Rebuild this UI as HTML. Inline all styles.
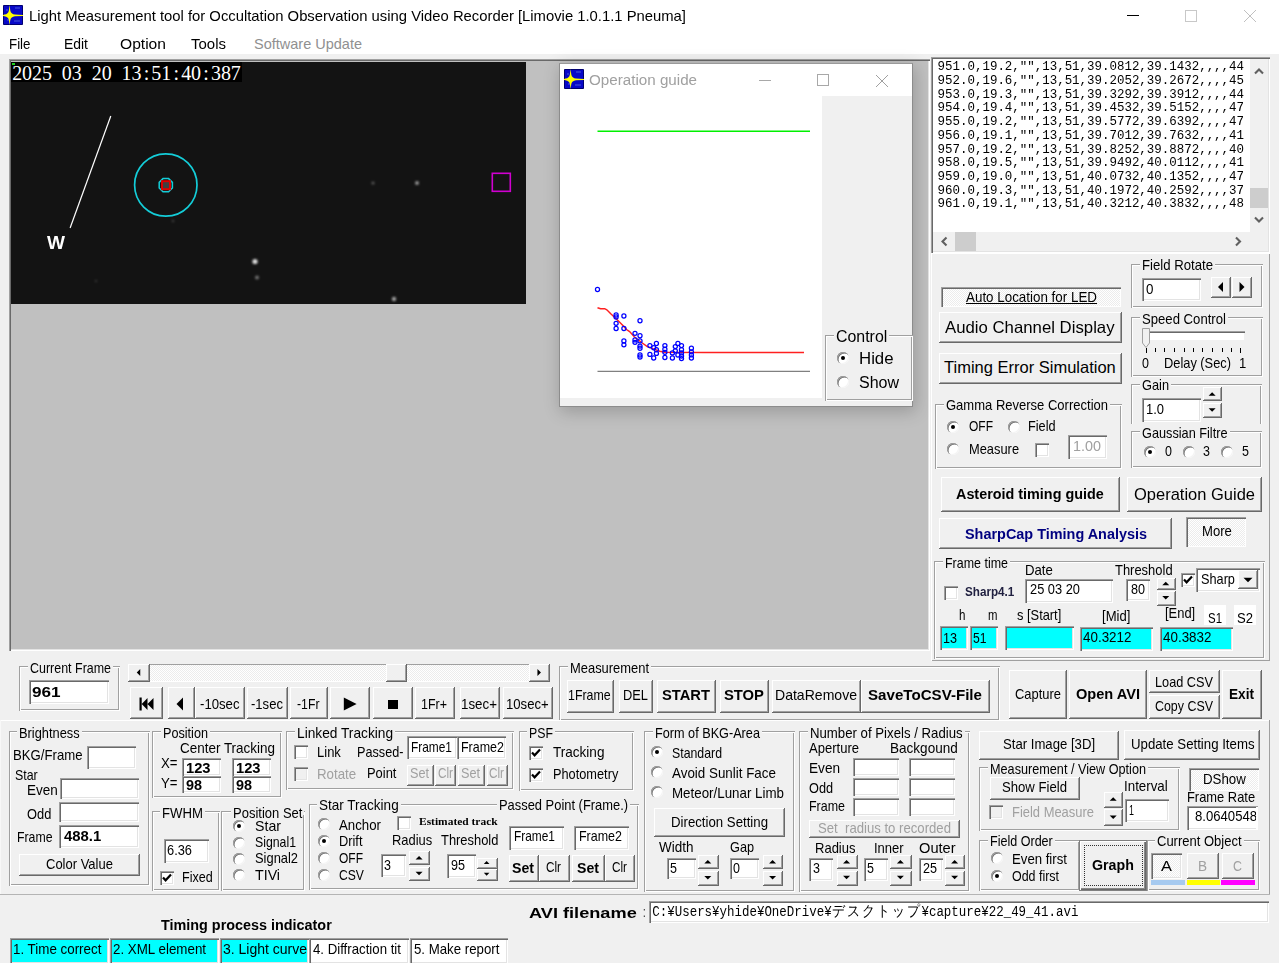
<!DOCTYPE html><html><head><meta charset="utf-8"><style>
*{margin:0;padding:0}
html,body{width:1279px;height:963px;overflow:hidden;background:#f0f0f0}
body{position:relative;font-family:"Liberation Sans",sans-serif;color:#000}
.a{position:absolute;box-sizing:border-box}
.t{position:absolute;white-space:nowrap;line-height:1;transform-origin:0 0;}
.btn{background:#f0f0f0;box-shadow:inset -1px -1px #696969,inset 1px 1px #fff,inset -2px -2px #a0a0a0}
.ed{background:#fff;box-shadow:inset 1px 1px #a0a0a0,inset 2px 2px #696969,inset -1px -1px #fff,inset -2px -2px #e3e3e3}
.grp{box-shadow:inset 1px 1px #a0a0a0,inset -1px -1px #fff,inset 2px 2px #fff,inset -2px -2px #a0a0a0}
.rd{width:12px;height:12px;border-radius:50%;background:#fff;box-shadow:inset 1px 1px #a0a0a0,inset 1.5px 1.5px #696969,inset -1px -1px #f4f4f4}
.rd i{position:absolute;left:4px;top:4px;width:4px;height:4px;border-radius:50%;background:#000}
.ck{box-shadow:inset 1px 1px #a0a0a0,inset 2px 2px #696969,inset -1px -1px #fff,inset -2px -2px #e3e3e3}
.dot{background-color:#f4f4f4;background-image:repeating-conic-gradient(#fff 0 25%,#ececec 0 50%);background-size:2px 2px}
.flat{box-shadow:inset 1px 1px #a0a0a0,inset 2px 2px #696969,inset -1px -1px #fff}
</style></head><body><div class="a " style="left:0px;top:0px;width:1279px;height:54px;background:#fff"></div>
<svg class="a" style="left:3px;top:5px" width="20" height="20" viewBox="0 0 20 20"><path d="M0.5 0.5H19.5V19.5H0.5Z" fill="#0808c8" stroke="#000070" stroke-width="1"/><path d="M3 5h2M12 3h5M11 16h6M4 15h2" stroke="#4a5ad8" stroke-width="1"/><path d="M6.6 0 L7.3 5.5 Q8 9.2 12 9.6 L20 9.9 V10.9 L12 11.2 Q8 11.8 7.3 15 L6.6 20 L5.9 15 Q5.2 11.8 1.5 11.2 L0 10.9 V9.9 L1.5 9.6 Q5.2 9.2 5.9 5.5Z" fill="#ffff00"/></svg>
<span class="t" style="left:28.75px;top:7.90px;font-size:15px;color:#000;transform:scale(0.9878,1.0000);-webkit-text-stroke:0;">Light Measurement tool for Occultation Observation using Video Recorder [Limovie 1.0.1.1 Pneuma]</span>
<div class="a " style="left:1127px;top:15px;width:12px;height:1px;background:#000"></div>
<div class="a " style="left:1185px;top:10px;width:12px;height:12px;border:1px solid #c8c8c8"></div>
<svg class="a" style="left:1243px;top:9px" width="14" height="14"><path d="M1 1L13 13M13 1L1 13" stroke="#c0c0c0" stroke-width="1"/></svg>
<span class="t" style="left:8.50px;top:37.13px;font-size:14.5px;color:#000;transform:scale(0.9198,1.0000);-webkit-text-stroke:0;">File</span>
<span class="t" style="left:63.50px;top:37.13px;font-size:14.5px;color:#000;transform:scale(0.9600,1.0000);-webkit-text-stroke:0;">Edit</span>
<span class="t" style="left:120.30px;top:37.13px;font-size:14.5px;color:#000;transform:scale(1.0760,1.0000);-webkit-text-stroke:0;">Option</span>
<span class="t" style="left:191.00px;top:37.13px;font-size:14.5px;color:#000;transform:scale(1.0332,1.0000);-webkit-text-stroke:0;">Tools</span>
<span class="t" style="left:254.00px;top:37.13px;font-size:14.5px;color:#909090;-webkit-text-stroke:0;">Software Update</span>
<div class="a " style="left:9px;top:59px;width:921px;height:592px;background:#c0c0c0;box-shadow:inset 1px 1px #a0a0a0,inset 2px 2px #696969,inset -1px -1px #fff,inset -2px -2px #e3e3e3"></div>
<div class="a " style="left:11px;top:62px;width:515px;height:242px;background:#131313"></div>
<div class="a " style="left:11px;top:62px;width:231px;height:20px;background:#000"></div>
<div class="a " style="left:12px;top:63px;width:3px;height:2px;background:#20d020"></div>
<span class="t" style="left:12.17px;top:63.05px;font-size:20px;font-family:'Liberation Serif',serif;color:#fff;">2</span>
<span class="t" style="left:22.11px;top:63.05px;font-size:20px;font-family:'Liberation Serif',serif;color:#fff;">0</span>
<span class="t" style="left:32.05px;top:63.05px;font-size:20px;font-family:'Liberation Serif',serif;color:#fff;">2</span>
<span class="t" style="left:41.99px;top:63.05px;font-size:20px;font-family:'Liberation Serif',serif;color:#fff;">5</span>
<span class="t" style="left:61.87px;top:63.05px;font-size:20px;font-family:'Liberation Serif',serif;color:#fff;">0</span>
<span class="t" style="left:71.81px;top:63.05px;font-size:20px;font-family:'Liberation Serif',serif;color:#fff;">3</span>
<span class="t" style="left:91.69px;top:63.05px;font-size:20px;font-family:'Liberation Serif',serif;color:#fff;">2</span>
<span class="t" style="left:101.63px;top:63.05px;font-size:20px;font-family:'Liberation Serif',serif;color:#fff;">0</span>
<span class="t" style="left:121.51px;top:63.05px;font-size:20px;font-family:'Liberation Serif',serif;color:#fff;">1</span>
<span class="t" style="left:131.45px;top:63.05px;font-size:20px;font-family:'Liberation Serif',serif;color:#fff;">3</span>
<span class="t" style="left:143.64px;top:63.05px;font-size:20px;font-family:'Liberation Serif',serif;color:#fff;">:</span>
<span class="t" style="left:151.33px;top:63.05px;font-size:20px;font-family:'Liberation Serif',serif;color:#fff;">5</span>
<span class="t" style="left:161.27px;top:63.05px;font-size:20px;font-family:'Liberation Serif',serif;color:#fff;">1</span>
<span class="t" style="left:173.46px;top:63.05px;font-size:20px;font-family:'Liberation Serif',serif;color:#fff;">:</span>
<span class="t" style="left:181.15px;top:63.05px;font-size:20px;font-family:'Liberation Serif',serif;color:#fff;">4</span>
<span class="t" style="left:191.09px;top:63.05px;font-size:20px;font-family:'Liberation Serif',serif;color:#fff;">0</span>
<span class="t" style="left:203.28px;top:63.05px;font-size:20px;font-family:'Liberation Serif',serif;color:#fff;">:</span>
<span class="t" style="left:210.97px;top:63.05px;font-size:20px;font-family:'Liberation Serif',serif;color:#fff;">3</span>
<span class="t" style="left:220.91px;top:63.05px;font-size:20px;font-family:'Liberation Serif',serif;color:#fff;">8</span>
<span class="t" style="left:230.85px;top:63.05px;font-size:20px;font-family:'Liberation Serif',serif;color:#fff;">7</span>
<span class="t" style="left:47.10px;top:233.76px;font-size:18px;font-weight:bold;color:#fff;transform:scale(1.0588,1.0000);">W</span>
<div class="a " style="left:559px;top:63px;width:354px;height:344px;background:#f0f0f0;border:1px solid #8c8c8c;border-top-color:#9a9a9a;box-shadow:2px 4px 16px 1px rgba(0,0,0,0.2)"></div>
<div class="a " style="left:560px;top:64px;width:352px;height:32px;background:#fff"></div>
<div class="a " style="left:560px;top:96px;width:262px;height:302px;background:#fff"></div>
<svg class="a" style="left:564px;top:69px" width="20" height="20" viewBox="0 0 20 20"><path d="M0.5 0.5H19.5V19.5H0.5Z" fill="#0808c8" stroke="#000070" stroke-width="1"/><path d="M3 5h2M12 3h5M11 16h6M4 15h2" stroke="#4a5ad8" stroke-width="1"/><path d="M6.6 0 L7.3 5.5 Q8 9.2 12 9.6 L20 9.9 V10.9 L12 11.2 Q8 11.8 7.3 15 L6.6 20 L5.9 15 Q5.2 11.8 1.5 11.2 L0 10.9 V9.9 L1.5 9.6 Q5.2 9.2 5.9 5.5Z" fill="#ffff00"/></svg>
<span class="t" style="left:589.40px;top:71.88px;font-size:15.5px;color:#a0a0a0;transform:scale(0.9796,1.0000);-webkit-text-stroke:0;">Operation guide</span>
<div class="a " style="left:759px;top:80px;width:12px;height:1px;background:#a8a8a8"></div>
<div class="a " style="left:817px;top:74px;width:12px;height:12px;border:1px solid #a8a8a8"></div>
<svg class="a" style="left:875px;top:74px" width="14" height="14"><path d="M1 1L13 13M13 1L1 13" stroke="#a0a0a0" stroke-width="1"/></svg>
<div class="a grp" style="left:825px;top:335px;width:88px;height:66px;"></div>
<div class="a " style="left:834px;top:335px;width:55px;height:4px;background:#f0f0f0"></div>
<span class="t" style="left:836.00px;top:328.96px;font-size:16px;transform:scale(0.9937,1.0000);">Control</span>
<div class="a rd" style="left:837.2px;top:352.1px"><i></i></div>
<span class="t" style="left:858.50px;top:351.46px;font-size:16px;transform:scale(1.0494,1.0000);">Hide</span>
<div class="a rd" style="left:837.2px;top:375.9px"></div>
<span class="t" style="left:858.50px;top:375.16px;font-size:16px;transform:scale(1.0019,1.0000);">Show</span>
<div class="a " style="left:931px;top:57px;width:339px;height:196px;background:#fff;box-shadow:inset 1px 1px #a0a0a0,inset 2px 2px #696969,inset -1px -1px #fff,inset -2px -2px #e3e3e3"></div>
<span class="t" style="left:937.6px;top:61.15px;font-family:'Liberation Mono',monospace;font-size:12.46px;transform:scaleY(1.08);transform-origin:0 10.4px">951.0,19.2,"",13,51,39.0812,39.1432,,,,44</span>
<span class="t" style="left:937.6px;top:74.88px;font-family:'Liberation Mono',monospace;font-size:12.46px;transform:scaleY(1.08);transform-origin:0 10.4px">952.0,19.6,"",13,51,39.2052,39.2672,,,,45</span>
<span class="t" style="left:937.6px;top:88.61px;font-family:'Liberation Mono',monospace;font-size:12.46px;transform:scaleY(1.08);transform-origin:0 10.4px">953.0,19.3,"",13,51,39.3292,39.3912,,,,44</span>
<span class="t" style="left:937.6px;top:102.34px;font-family:'Liberation Mono',monospace;font-size:12.46px;transform:scaleY(1.08);transform-origin:0 10.4px">954.0,19.4,"",13,51,39.4532,39.5152,,,,47</span>
<span class="t" style="left:937.6px;top:116.07px;font-family:'Liberation Mono',monospace;font-size:12.46px;transform:scaleY(1.08);transform-origin:0 10.4px">955.0,19.2,"",13,51,39.5772,39.6392,,,,47</span>
<span class="t" style="left:937.6px;top:129.80px;font-family:'Liberation Mono',monospace;font-size:12.46px;transform:scaleY(1.08);transform-origin:0 10.4px">956.0,19.1,"",13,51,39.7012,39.7632,,,,41</span>
<span class="t" style="left:937.6px;top:143.53px;font-family:'Liberation Mono',monospace;font-size:12.46px;transform:scaleY(1.08);transform-origin:0 10.4px">957.0,19.2,"",13,51,39.8252,39.8872,,,,40</span>
<span class="t" style="left:937.6px;top:157.26px;font-family:'Liberation Mono',monospace;font-size:12.46px;transform:scaleY(1.08);transform-origin:0 10.4px">958.0,19.5,"",13,51,39.9492,40.0112,,,,41</span>
<span class="t" style="left:937.6px;top:170.99px;font-family:'Liberation Mono',monospace;font-size:12.46px;transform:scaleY(1.08);transform-origin:0 10.4px">959.0,19.0,"",13,51,40.0732,40.1352,,,,47</span>
<span class="t" style="left:937.6px;top:184.72px;font-family:'Liberation Mono',monospace;font-size:12.46px;transform:scaleY(1.08);transform-origin:0 10.4px">960.0,19.3,"",13,51,40.1972,40.2592,,,,37</span>
<span class="t" style="left:937.6px;top:198.45px;font-family:'Liberation Mono',monospace;font-size:12.46px;transform:scaleY(1.08);transform-origin:0 10.4px">961.0,19.1,"",13,51,40.3212,40.3832,,,,48</span>
<div class="a " style="left:1250px;top:59px;width:18px;height:173px;background:#f0f0f0"></div>
<div class="a " style="left:1250px;top:188px;width:18px;height:20px;background:#cdcdcd"></div>
<svg class="a" style="left:1250px;top:59px" width="18" height="173"><path d="M5 14.5L9 10.5L13 14.5" fill="none" stroke="#606060" stroke-width="2.1"/><path d="M5 158.5L9 162.5L13 158.5" fill="none" stroke="#606060" stroke-width="2.1"/></svg>
<div class="a " style="left:933px;top:232px;width:335px;height:19px;background:#f0f0f0"></div>
<div class="a " style="left:955px;top:232px;width:21px;height:19px;background:#cdcdcd"></div>
<svg class="a" style="left:933px;top:232px" width="335" height="19"><path d="M13.5 5.5L9.5 9.5L13.5 13.5" fill="none" stroke="#606060" stroke-width="2.1"/><path d="M303 5.5L307 9.5L303 13.5" fill="none" stroke="#606060" stroke-width="2.1"/></svg>
<div class="a " style="left:931px;top:253px;width:339px;height:408px;box-shadow:inset 1px 1px #fff,inset -1px -1px #a0a0a0"></div>
<div class="a dot" style="left:941px;top:287px;width:180px;height:20px;box-shadow:inset 1px 1px #a0a0a0,inset 2px 2px #696969,inset -1px -1px #fff"></div>
<span class="t" style="left:966.00px;top:289.53px;font-size:14.5px;transform:scale(0.9233,1.0000);text-decoration:underline;">Auto Location for LED</span>
<div class="a btn" style="left:939px;top:312px;width:183px;height:31px;"></div>
<span class="t" style="left:945.30px;top:318.73px;font-size:16.5px;transform:scale(1.0157,1.0000);">Audio Channel Display</span>
<div class="a btn" style="left:939px;top:353px;width:183px;height:31px;"></div>
<span class="t" style="left:944.00px;top:358.93px;font-size:16.5px;">Timing Error Simulation</span>
<div class="a grp" style="left:1131px;top:264px;width:132px;height:44px;"></div>
<div class="a " style="left:1140px;top:263px;width:75px;height:4px;background:#f0f0f0"></div>
<span class="t" style="left:1141.80px;top:257.93px;font-size:14.5px;transform:scale(0.9088,1.0000);">Field Rotate</span>
<div class="a ed" style="left:1142px;top:278px;width:59px;height:23px;background:#fff"></div>
<span class="t" style="left:1145.50px;top:282.13px;font-size:14.5px;transform:scale(0.9231,1.0000);">0</span>
<div class="a btn" style="left:1211px;top:277px;width:20px;height:21px;"></div>
<div class="a btn" style="left:1232px;top:277px;width:20px;height:21px;"></div>
<div class="a grp" style="left:1131px;top:317px;width:132px;height:60px;"></div>
<div class="a " style="left:1140px;top:316px;width:88px;height:4px;background:#f0f0f0"></div>
<span class="t" style="left:1141.80px;top:311.73px;font-size:14.5px;transform:scale(0.9057,1.0000);">Speed Control</span>
<div class="a " style="left:1142px;top:331px;width:103px;height:10px;background:#fff;box-shadow:inset 1px 1px #a0a0a0,inset 2px 2px #696969,inset -1px -1px #f0f0f0"></div>
<svg class="a" style="left:1141px;top:328px" width="12" height="21"><path d="M1.5 0.5H8.5V15L5 19.5L1.5 15Z" fill="#f0f0f0" stroke="#a0a0a0"/></svg>
<div class="a " style="left:1146px;top:348px;width:1px;height:5px;background:#000"></div>
<div class="a " style="left:1155px;top:348px;width:1px;height:4px;background:#000"></div>
<div class="a " style="left:1164px;top:348px;width:1px;height:4px;background:#000"></div>
<div class="a " style="left:1174px;top:348px;width:1px;height:4px;background:#000"></div>
<div class="a " style="left:1184px;top:348px;width:1px;height:4px;background:#000"></div>
<div class="a " style="left:1193px;top:348px;width:1px;height:4px;background:#000"></div>
<div class="a " style="left:1202px;top:348px;width:1px;height:4px;background:#000"></div>
<div class="a " style="left:1212px;top:348px;width:1px;height:4px;background:#000"></div>
<div class="a " style="left:1222px;top:348px;width:1px;height:4px;background:#000"></div>
<div class="a " style="left:1231px;top:348px;width:1px;height:4px;background:#000"></div>
<div class="a " style="left:1240px;top:348px;width:1px;height:5px;background:#000"></div>
<span class="t" style="left:1141.80px;top:356.13px;font-size:14.5px;transform:scale(0.8615,1.0000);">0</span>
<span class="t" style="left:1163.60px;top:356.13px;font-size:14.5px;transform:scale(0.8845,1.0000);">Delay (Sec)</span>
<span class="t" style="left:1239.00px;top:356.13px;font-size:14.5px;transform:scale(0.9000,1.0000);">1</span>
<div class="a grp" style="left:1131px;top:384px;width:131px;height:47px;"></div>
<div class="a " style="left:1140px;top:383px;width:31px;height:4px;background:#f0f0f0"></div>
<span class="t" style="left:1142.00px;top:378.23px;font-size:14.5px;transform:scale(0.8816,1.0000);">Gain</span>
<div class="a " style="left:1130px;top:424px;width:133px;height:8px;background:#f0f0f0"></div>
<div class="a ed" style="left:1142px;top:398px;width:59px;height:24px;background:#fff"></div>
<span class="t" style="left:1146.00px;top:402.23px;font-size:14.5px;transform:scale(0.8944,1.0000);">1.0</span>
<div class="a btn" style="left:1203px;top:387px;width:19px;height:14px;"></div>
<div class="a btn" style="left:1203px;top:403px;width:19px;height:15px;"></div>
<div class="a grp" style="left:1131px;top:431px;width:131px;height:37px;"></div>
<div class="a " style="left:1140px;top:431px;width:90px;height:4px;background:#f0f0f0"></div>
<span class="t" style="left:1142.00px;top:425.53px;font-size:14.5px;transform:scale(0.8769,1.0000);">Gaussian Filtre</span>
<div class="a rd" style="left:1143.8px;top:445.8px"><i></i></div>
<span class="t" style="left:1164.50px;top:444.13px;font-size:14.5px;transform:scale(0.8615,1.0000);">0</span>
<div class="a rd" style="left:1182.5px;top:445.8px"></div>
<span class="t" style="left:1203.30px;top:444.13px;font-size:14.5px;transform:scale(0.8615,1.0000);">3</span>
<div class="a rd" style="left:1221.3px;top:445.8px"></div>
<span class="t" style="left:1241.80px;top:444.13px;font-size:14.5px;transform:scale(0.8615,1.0000);">5</span>
<div class="a grp" style="left:935px;top:404px;width:187px;height:65px;"></div>
<div class="a " style="left:944px;top:403px;width:166px;height:4px;background:#f0f0f0"></div>
<span class="t" style="left:946.10px;top:398.03px;font-size:14.5px;transform:scale(0.8975,1.0000);">Gamma Reverse Correction</span>
<div class="a rd" style="left:947.3px;top:420.7px"><i></i></div>
<span class="t" style="left:968.50px;top:419.13px;font-size:14.5px;transform:scale(0.8276,1.0000);">OFF</span>
<div class="a rd" style="left:1007.5px;top:420.7px"></div>
<span class="t" style="left:1028.20px;top:419.13px;font-size:14.5px;transform:scale(0.8765,1.0000);">Field</span>
<div class="a rd" style="left:947.3px;top:443.4px"></div>
<span class="t" style="left:968.50px;top:441.83px;font-size:14.5px;transform:scale(0.8869,1.0000);">Measure</span>
<div class="a ck" style="left:1035.2px;top:442.9px;width:14px;height:14px;background:#fff"></div>
<div class="a ed" style="left:1068px;top:435px;width:39px;height:24px;background:#fff"></div>
<span class="t" style="left:1073.00px;top:438.73px;font-size:14.5px;color:#a0a0a0;transform:scale(0.9912,1.0000);">1.00</span>
<div class="a btn" style="left:941px;top:477px;width:179px;height:35px;"></div>
<span class="t" style="left:956.30px;top:487.13px;font-size:14.5px;font-weight:bold;transform:scale(0.9913,1.0000);">Asteroid timing guide</span>
<div class="a btn" style="left:1127px;top:477px;width:135px;height:35px;"></div>
<span class="t" style="left:1134.40px;top:486.31px;font-size:17px;transform:scale(0.9699,1.0000);">Operation Guide</span>
<div class="a btn" style="left:939px;top:518px;width:233px;height:31px;"></div>
<span class="t" style="left:964.90px;top:526.53px;font-size:14.5px;font-weight:bold;color:#000080;transform:scale(0.9952,1.0000);">SharpCap Timing Analysis</span>
<div class="a dot" style="left:1186px;top:517px;width:60px;height:30px;box-shadow:inset 1px 1px #a0a0a0,inset 2px 2px #696969,inset -1px -1px #fff"></div>
<span class="t" style="left:1201.80px;top:524.43px;font-size:14.5px;transform:scale(0.9030,1.0000);">More</span>
<div class="a grp" style="left:934px;top:561px;width:331px;height:98px;"></div>
<div class="a " style="left:943px;top:561px;width:67px;height:4px;background:#f0f0f0"></div>
<span class="t" style="left:944.70px;top:555.53px;font-size:14.5px;transform:scale(0.8586,1.0000);">Frame time</span>
<span class="t" style="left:1024.60px;top:562.53px;font-size:14.5px;transform:scale(0.9078,1.0000);">Date</span>
<div class="a ed" style="left:1025px;top:579px;width:88px;height:24px;background:#fff"></div>
<span class="t" style="left:1029.50px;top:582.23px;font-size:14.5px;transform:scale(0.8850,1.0000);">25 03 20</span>
<span class="t" style="left:1115.10px;top:563.03px;font-size:14.5px;transform:scale(0.8930,1.0000);">Threshold</span>
<div class="a ed" style="left:1126px;top:579px;width:24px;height:22px;background:#fff"></div>
<span class="t" style="left:1130.50px;top:582.13px;font-size:14.5px;transform:scale(0.8682,1.0000);">80</span>
<div class="a btn" style="left:1157px;top:578px;width:19px;height:12px;"></div>
<div class="a btn" style="left:1157px;top:591px;width:19px;height:15px;"></div>
<div class="a ck" style="left:1180.6px;top:572.9px;width:14px;height:14px;background:#fff"><svg width="14" height="14" viewBox="0 0 14 14" style="position:absolute;left:0;top:0"><path d="M3 6.5 L5.6 9.3 L11 3.6" fill="none" stroke="#000" stroke-width="2.2"/></svg></div>
<div class="a ed" style="left:1196px;top:568px;width:64px;height:24px;"></div>
<div class="a btn" style="left:1238px;top:570px;width:20px;height:19px;"></div>
<span class="t" style="left:1201.00px;top:571.73px;font-size:14.5px;transform:scale(0.8774,1.0000);">Sharp</span>
<div class="a ck" style="left:944.4px;top:585.5px;width:14px;height:14px;background:#fff"></div>
<span class="t" style="left:965.10px;top:586.17px;font-size:12.5px;font-weight:bold;color:#202040;transform:scale(0.9346,1.0000);">Sharp4.1</span>
<span class="t" style="left:958.50px;top:607.98px;font-size:14.5px;transform:scale(0.8000,1.0000);">h</span>
<span class="t" style="left:987.90px;top:607.98px;font-size:14.5px;transform:scale(0.7835,1.0000);">m</span>
<span class="t" style="left:1017.20px;top:607.98px;font-size:14.5px;transform:scale(0.8860,1.0000);">s [Start]</span>
<span class="t" style="left:1101.90px;top:608.53px;font-size:14.5px;transform:scale(0.9020,1.0000);">[Mid]</span>
<span class="t" style="left:1164.80px;top:606.23px;font-size:14.5px;transform:scale(0.8915,1.0000);">[End]</span>
<div class="a " style="left:1204px;top:605px;width:22px;height:20px;background:#fff"></div>
<div class="a " style="left:1234px;top:605px;width:22px;height:20px;background:#fff"></div>
<span class="t" style="left:1207.50px;top:610.53px;font-size:14.5px;transform:scale(0.7887,1.0000);">S1</span>
<span class="t" style="left:1236.50px;top:610.53px;font-size:14.5px;transform:scale(0.9014,1.0000);">S2</span>
<div class="a ed" style="left:940px;top:626px;width:28px;height:24px;background:#00ffff"></div>
<span class="t" style="left:943.00px;top:630.53px;font-size:14.5px;transform:scale(0.8682,1.0000);">13</span>
<div class="a ed" style="left:970px;top:626px;width:28px;height:24px;background:#00ffff"></div>
<span class="t" style="left:973.00px;top:630.53px;font-size:14.5px;transform:scale(0.8372,1.0000);">51</span>
<div class="a ed" style="left:1005px;top:626px;width:69px;height:24px;background:#00ffff"></div>
<div class="a ed" style="left:1080px;top:627px;width:73px;height:24px;background:#00ffff"></div>
<span class="t" style="left:1083.30px;top:630.33px;font-size:14.5px;transform:scale(0.9241,1.0000);">40.3212</span>
<div class="a ed" style="left:1160px;top:627px;width:73px;height:24px;background:#00ffff"></div>
<span class="t" style="left:1163.00px;top:630.33px;font-size:14.5px;transform:scale(0.9241,1.0000);">40.3832</span>
<div class="a grp" style="left:19px;top:666px;width:101px;height:45px;"></div>
<div class="a " style="left:28px;top:666px;width:85px;height:4px;background:#f0f0f0"></div>
<span class="t" style="left:30.00px;top:661.23px;font-size:14.5px;transform:scale(0.8594,1.0000);">Current Frame</span>
<div class="a ed" style="left:29px;top:680px;width:80px;height:24px;background:#fff"></div>
<span class="t" style="left:32.00px;top:683.90px;font-size:15px;font-weight:bold;transform:scale(1.1440,1.0000);">961</span>
<div class="a dot" style="left:128px;top:664px;width:422px;height:18px;box-shadow:inset 1px 1px #a0a0a0,inset -1px -1px #fff"></div>
<div class="a btn" style="left:128px;top:664px;width:22px;height:18px;"></div>
<div class="a btn" style="left:386px;top:664px;width:21px;height:18px;"></div>
<div class="a btn" style="left:529px;top:664px;width:21px;height:18px;"></div>
<div class="a btn" style="left:130px;top:687px;width:33px;height:32px;"></div>
<div class="a btn" style="left:168px;top:687px;width:27px;height:32px;"></div>
<div class="a btn" style="left:195px;top:687px;width:50px;height:32px;"></div>
<span class="t" style="left:199.60px;top:697.43px;font-size:14.5px;transform:scale(0.9080,1.0000);">-10sec</span>
<div class="a btn" style="left:247px;top:687px;width:41px;height:32px;"></div>
<span class="t" style="left:251.00px;top:697.43px;font-size:14.5px;transform:scale(0.9014,1.0000);">-1sec</span>
<div class="a btn" style="left:290px;top:687px;width:38px;height:32px;"></div>
<span class="t" style="left:297.20px;top:697.43px;font-size:14.5px;transform:scale(0.8451,1.0000);">-1Fr</span>
<div class="a btn" style="left:330px;top:687px;width:40px;height:32px;"></div>
<div class="a btn" style="left:373px;top:687px;width:40px;height:32px;"></div>
<div class="a " style="left:388px;top:700px;width:10px;height:9px;background:#000"></div>
<div class="a btn" style="left:415px;top:687px;width:40px;height:32px;"></div>
<span class="t" style="left:421.30px;top:697.43px;font-size:14.5px;transform:scale(0.8595,1.0000);">1Fr+</span>
<div class="a btn" style="left:460px;top:687px;width:40px;height:32px;"></div>
<span class="t" style="left:461.35px;top:697.43px;font-size:14.5px;transform:scale(0.9201,1.0000);">1sec+</span>
<div class="a btn" style="left:503px;top:687px;width:50px;height:32px;"></div>
<span class="t" style="left:505.90px;top:697.43px;font-size:14.5px;transform:scale(0.9061,1.0000);">10sec+</span>
<div class="a grp" style="left:559px;top:666px;width:441px;height:55px;"></div>
<div class="a " style="left:568px;top:665px;width:83px;height:4px;background:#f0f0f0"></div>
<span class="t" style="left:569.80px;top:660.73px;font-size:14.5px;transform:scale(0.8914,1.0000);">Measurement</span>
<div class="a btn" style="left:567px;top:680px;width:47px;height:33px;"></div>
<span class="t" style="left:568.30px;top:688.03px;font-size:14.5px;transform:scale(0.8540,1.0000);">1Frame</span>
<div class="a btn" style="left:619px;top:680px;width:34px;height:33px;"></div>
<span class="t" style="left:622.95px;top:688.03px;font-size:14.5px;transform:scale(0.8850,1.0000);">DEL</span>
<div class="a btn" style="left:657px;top:680px;width:59px;height:33px;"></div>
<span class="t" style="left:661.95px;top:688.03px;font-size:14.5px;font-weight:bold;transform:scale(1.0159,1.0000);">START</span>
<div class="a btn" style="left:720px;top:680px;width:49px;height:33px;"></div>
<span class="t" style="left:723.60px;top:688.03px;font-size:14.5px;font-weight:bold;transform:scale(1.0191,1.0000);">STOP</span>
<div class="a btn" style="left:772px;top:680px;width:89px;height:33px;"></div>
<span class="t" style="left:774.75px;top:688.03px;font-size:14.5px;transform:scale(0.9690,1.0000);">DataRemove</span>
<div class="a btn" style="left:861px;top:680px;width:129px;height:33px;"></div>
<span class="t" style="left:867.85px;top:688.03px;font-size:14.5px;font-weight:bold;transform:scale(1.0423,1.0000);">SaveToCSV-File</span>
<div class="a btn" style="left:1009px;top:670px;width:58px;height:49px;"></div>
<span class="t" style="left:1014.50px;top:687.33px;font-size:14.5px;transform:scale(0.8910,1.0000);">Capture</span>
<div class="a btn" style="left:1069px;top:670px;width:78px;height:49px;"></div>
<span class="t" style="left:1075.50px;top:687.33px;font-size:14.5px;font-weight:bold;transform:scale(1.0059,1.0000);">Open AVI</span>
<div class="a btn" style="left:1149px;top:670px;width:71px;height:23px;"></div>
<span class="t" style="left:1154.85px;top:674.73px;font-size:14.5px;transform:scale(0.8771,1.0000);">Load CSV</span>
<div class="a btn" style="left:1149px;top:695px;width:71px;height:24px;"></div>
<span class="t" style="left:1154.85px;top:699.03px;font-size:14.5px;transform:scale(0.8561,1.0000);">Copy CSV</span>
<div class="a btn" style="left:1222px;top:670px;width:40px;height:49px;"></div>
<span class="t" style="left:1228.95px;top:687.33px;font-size:14.5px;font-weight:bold;transform:scale(0.9390,1.0000);">Exit</span>
<div class="a " style="left:0px;top:720px;width:1269px;height:1px;background:#fff"></div>
<div class="a " style="left:0px;top:720px;width:1px;height:174px;background:#f8f8f8"></div>
<div class="a " style="left:1269px;top:720px;width:1px;height:175px;background:#a0a0a0"></div>
<div class="a " style="left:0px;top:894px;width:1270px;height:1px;background:#b4b4b4"></div>
<div class="a grp" style="left:9px;top:731px;width:141px;height:155px;"></div>
<div class="a " style="left:17px;top:731px;width:65px;height:4px;background:#f0f0f0"></div>
<span class="t" style="left:19.40px;top:725.73px;font-size:14.5px;transform:scale(0.8847,1.0000);">Brightness</span>
<span class="t" style="left:12.50px;top:748.33px;font-size:14.5px;transform:scale(0.9085,1.0000);">BKG/Frame</span>
<div class="a ed" style="left:87px;top:746px;width:49px;height:23px;background:#fff"></div>
<span class="t" style="left:14.75px;top:768.33px;font-size:14.5px;transform:scale(0.8545,1.0000);">Star</span>
<span class="t" style="left:27.00px;top:783.33px;font-size:14.5px;transform:scale(0.9318,1.0000);">Even</span>
<div class="a ed" style="left:60px;top:778px;width:79px;height:21px;background:#fff"></div>
<span class="t" style="left:27.25px;top:807.13px;font-size:14.5px;transform:scale(0.8858,1.0000);">Odd</span>
<div class="a ed" style="left:59px;top:802px;width:80px;height:20px;background:#fff"></div>
<span class="t" style="left:17.25px;top:829.63px;font-size:14.5px;transform:scale(0.8478,1.0000);">Frame</span>
<div class="a ed" style="left:59px;top:825px;width:80px;height:23px;background:#fff"></div>
<span class="t" style="left:63.75px;top:828.73px;font-size:14.5px;font-weight:bold;transform:scale(1.0276,1.0000);">488.1</span>
<div class="a btn" style="left:19px;top:854px;width:121px;height:22px;"></div>
<span class="t" style="left:46.00px;top:857.33px;font-size:14.5px;transform:scale(0.8963,1.0000);">Color Value</span>
<div class="a grp" style="left:152px;top:731px;width:130px;height:67px;"></div>
<div class="a " style="left:161px;top:731px;width:49px;height:4px;background:#f0f0f0"></div>
<span class="t" style="left:162.50px;top:725.73px;font-size:14.5px;transform:scale(0.8717,1.0000);">Position</span>
<span class="t" style="left:180.00px;top:740.73px;font-size:14.5px;transform:scale(0.9280,1.0000);">Center Tracking</span>
<span class="t" style="left:161.25px;top:755.73px;font-size:14.5px;transform:scale(0.9103,1.0000);">X=</span>
<span class="t" style="left:161.25px;top:775.73px;font-size:14.5px;transform:scale(0.9103,1.0000);">Y=</span>
<div class="a ed" style="left:182px;top:758px;width:39px;height:18px;background:#fff"></div>
<span class="t" style="left:186.25px;top:759.80px;font-size:15px;font-weight:bold;transform:scale(0.9800,1.0000);">123</span>
<div class="a ed" style="left:182px;top:776px;width:39px;height:17px;background:#fff"></div>
<span class="t" style="left:186.25px;top:777.30px;font-size:15px;font-weight:bold;transform:scale(0.9624,1.0000);">98</span>
<div class="a ed" style="left:232px;top:758px;width:39px;height:18px;background:#fff"></div>
<span class="t" style="left:236.30px;top:759.80px;font-size:15px;font-weight:bold;transform:scale(0.9800,1.0000);">123</span>
<div class="a ed" style="left:232px;top:776px;width:39px;height:17px;background:#fff"></div>
<span class="t" style="left:236.30px;top:777.30px;font-size:15px;font-weight:bold;transform:scale(0.9624,1.0000);">98</span>
<div class="a grp" style="left:152px;top:811px;width:68px;height:80px;"></div>
<div class="a " style="left:160px;top:811px;width:45px;height:4px;background:#f0f0f0"></div>
<span class="t" style="left:162.00px;top:805.73px;font-size:14.5px;transform:scale(0.9086,1.0000);">FWHM</span>
<div class="a ed" style="left:164px;top:839px;width:45px;height:24px;background:#fff"></div>
<span class="t" style="left:167.00px;top:842.73px;font-size:14.5px;transform:scale(0.8850,1.0000);">6.36</span>
<div class="a ck" style="left:159.75px;top:870.6px;width:14px;height:14px;background:#fff"><svg width="14" height="14" viewBox="0 0 14 14" style="position:absolute;left:0;top:0"><path d="M3 6.5 L5.6 9.3 L11 3.6" fill="none" stroke="#000" stroke-width="2.2"/></svg></div>
<span class="t" style="left:182.25px;top:870.23px;font-size:14.5px;transform:scale(0.8662,1.0000);">Fixed</span>
<div class="a grp" style="left:221px;top:811px;width:84px;height:80px;"></div>
<div class="a " style="left:231px;top:811px;width:73px;height:4px;background:#f0f0f0"></div>
<span class="t" style="left:232.50px;top:805.73px;font-size:14.5px;transform:scale(0.8969,1.0000);">Position Set</span>
<div class="a rd" style="left:233px;top:820.25px"><i></i></div>
<span class="t" style="left:254.75px;top:818.73px;font-size:14.5px;transform:scale(0.9765,1.0000);">Star</span>
<div class="a rd" style="left:233px;top:836.5px"></div>
<span class="t" style="left:254.75px;top:834.73px;font-size:14.5px;transform:scale(0.8475,1.0000);">Signal1</span>
<div class="a rd" style="left:233px;top:852.75px"></div>
<span class="t" style="left:254.75px;top:851.23px;font-size:14.5px;transform:scale(0.8889,1.0000);">Signal2</span>
<div class="a rd" style="left:233px;top:869px"></div>
<span class="t" style="left:254.75px;top:867.73px;font-size:14.5px;transform:scale(0.9804,1.0000);">TIVi</span>
<div class="a grp" style="left:286px;top:731px;width:228px;height:59px;"></div>
<div class="a " style="left:295px;top:731px;width:100px;height:4px;background:#f0f0f0"></div>
<span class="t" style="left:296.90px;top:725.73px;font-size:14.5px;transform:scale(0.9458,1.0000);">Linked Tracking</span>
<div class="a ck" style="left:294.4px;top:745px;width:14px;height:14px;background:#fff"></div>
<span class="t" style="left:317.25px;top:744.63px;font-size:14.5px;transform:scale(0.8972,1.0000);">Link</span>
<span class="t" style="left:357.25px;top:744.73px;font-size:14.5px;transform:scale(0.8732,1.0000);">Passed-</span>
<div class="a ck" style="left:294.4px;top:767.25px;width:14px;height:14px;background:#f0f0f0"></div>
<span class="t" style="left:317.25px;top:767.13px;font-size:14.5px;color:#a0a0a0;transform:scale(0.9181,1.0000);">Rotate</span>
<span class="t" style="left:366.90px;top:765.73px;font-size:14.5px;transform:scale(0.8909,1.0000);">Point</span>
<div class="a ed" style="left:407px;top:736px;width:50px;height:23px;background:#fff"></div>
<span class="t" style="left:411.00px;top:739.63px;font-size:14.5px;transform:scale(0.8200,1.0000);">Frame1</span>
<div class="a ed" style="left:457px;top:736px;width:49px;height:23px;background:#fff"></div>
<span class="t" style="left:461.00px;top:739.63px;font-size:14.5px;transform:scale(0.8600,1.0000);">Frame2</span>
<div class="a btn" style="left:407px;top:765px;width:27px;height:21px;"></div>
<span class="t" style="left:410.12px;top:766.48px;font-size:14.5px;color:#a0a0a0;transform:scale(0.8736,1.0000);">Set</span>
<div class="a btn" style="left:435px;top:765px;width:21px;height:21px;"></div>
<span class="t" style="left:437.62px;top:766.48px;font-size:14.5px;color:#a0a0a0;transform:scale(0.8108,1.0000);">Clr</span>
<div class="a btn" style="left:458px;top:765px;width:27px;height:21px;"></div>
<span class="t" style="left:461.38px;top:766.48px;font-size:14.5px;color:#a0a0a0;transform:scale(0.8736,1.0000);">Set</span>
<div class="a btn" style="left:487px;top:765px;width:21px;height:21px;"></div>
<span class="t" style="left:489.12px;top:766.48px;font-size:14.5px;color:#a0a0a0;transform:scale(0.8108,1.0000);">Clr</span>
<div class="a grp" style="left:519px;top:731px;width:115px;height:60px;"></div>
<div class="a " style="left:527px;top:731px;width:28px;height:4px;background:#f0f0f0"></div>
<span class="t" style="left:529.40px;top:725.73px;font-size:14.5px;transform:scale(0.8496,1.0000);">PSF</span>
<div class="a ck" style="left:529.4px;top:745.6px;width:14px;height:14px;background:#fff"><svg width="14" height="14" viewBox="0 0 14 14" style="position:absolute;left:0;top:0"><path d="M3 6.5 L5.6 9.3 L11 3.6" fill="none" stroke="#000" stroke-width="2.2"/></svg></div>
<span class="t" style="left:552.50px;top:744.63px;font-size:14.5px;transform:scale(0.9342,1.0000);">Tracking</span>
<div class="a ck" style="left:529.4px;top:768px;width:14px;height:14px;background:#fff"><svg width="14" height="14" viewBox="0 0 14 14" style="position:absolute;left:0;top:0"><path d="M3 6.5 L5.6 9.3 L11 3.6" fill="none" stroke="#000" stroke-width="2.2"/></svg></div>
<span class="t" style="left:552.50px;top:767.13px;font-size:14.5px;transform:scale(0.8803,1.0000);">Photometry</span>
<div class="a grp" style="left:309px;top:804px;width:330px;height:86px;"></div>
<div class="a " style="left:317px;top:804px;width:84px;height:4px;background:#f0f0f0"></div>
<span class="t" style="left:319.40px;top:798.33px;font-size:14.5px;transform:scale(0.9324,1.0000);">Star Tracking</span>
<div class="a " style="left:497px;top:804px;width:133px;height:4px;background:#f0f0f0"></div>
<span class="t" style="left:499.40px;top:798.33px;font-size:14.5px;transform:scale(0.8897,1.0000);">Passed Point (Frame.)</span>
<div class="a rd" style="left:318.4px;top:818.4px"></div>
<span class="t" style="left:339.40px;top:817.98px;font-size:14.5px;transform:scale(0.9130,1.0000);">Anchor</span>
<div class="a rd" style="left:318.4px;top:834.6px"><i></i></div>
<span class="t" style="left:339.40px;top:834.23px;font-size:14.5px;transform:scale(0.8826,1.0000);">Drift</span>
<div class="a rd" style="left:318.4px;top:851.5px"></div>
<span class="t" style="left:339.40px;top:850.73px;font-size:14.5px;transform:scale(0.8276,1.0000);">OFF</span>
<div class="a rd" style="left:318.4px;top:869px"></div>
<span class="t" style="left:339.40px;top:867.98px;font-size:14.5px;transform:scale(0.8368,1.0000);">CSV</span>
<div class="a ck" style="left:396.9px;top:815.6px;width:14px;height:14px;background:#fff"></div>
<span class="t" style="left:418.75px;top:816.09px;font-size:11px;font-family:'Liberation Serif',serif;font-weight:bold;transform:scale(1.0424,1.0000);">Estimated track</span>
<span class="t" style="left:392.25px;top:833.33px;font-size:14.5px;transform:scale(0.8920,1.0000);">Radius</span>
<span class="t" style="left:440.50px;top:833.23px;font-size:14.5px;transform:scale(0.8899,1.0000);">Threshold</span>
<div class="a ed" style="left:381px;top:854px;width:25px;height:23px;background:#fff"></div>
<span class="t" style="left:384.00px;top:858.33px;font-size:14.5px;transform:scale(0.8615,1.0000);">3</span>
<div class="a btn" style="left:409px;top:851px;width:21px;height:14px;"></div>
<div class="a btn" style="left:409px;top:867px;width:21px;height:14px;"></div>
<div class="a ed" style="left:447px;top:854px;width:29px;height:24px;background:#fff"></div>
<span class="t" style="left:451.00px;top:858.13px;font-size:14.5px;transform:scale(0.8682,1.0000);">95</span>
<div class="a btn" style="left:477px;top:858px;width:21px;height:11px;"></div>
<div class="a btn" style="left:477px;top:869px;width:21px;height:12px;"></div>
<div class="a ed" style="left:509px;top:826px;width:55px;height:24px;background:#fff"></div>
<span class="t" style="left:513.50px;top:829.33px;font-size:14.5px;transform:scale(0.8200,1.0000);">Frame1</span>
<div class="a ed" style="left:574px;top:826px;width:55px;height:24px;background:#fff"></div>
<span class="t" style="left:578.50px;top:829.33px;font-size:14.5px;transform:scale(0.8600,1.0000);">Frame2</span>
<div class="a btn" style="left:509px;top:855px;width:30px;height:27px;"></div>
<span class="t" style="left:512.45px;top:859.70px;font-size:15px;font-weight:bold;transform:scale(0.9412,1.0000);">Set</span>
<div class="a btn" style="left:539px;top:855px;width:31px;height:27px;"></div>
<span class="t" style="left:546.30px;top:860.13px;font-size:14.5px;transform:scale(0.8108,1.0000);">Clr</span>
<div class="a btn" style="left:572px;top:855px;width:33px;height:27px;"></div>
<span class="t" style="left:577.05px;top:859.70px;font-size:15px;font-weight:bold;transform:scale(0.9412,1.0000);">Set</span>
<div class="a btn" style="left:605px;top:855px;width:30px;height:27px;"></div>
<span class="t" style="left:612.30px;top:860.13px;font-size:14.5px;transform:scale(0.8108,1.0000);">Clr</span>
<div class="a grp" style="left:644px;top:731px;width:151px;height:161px;"></div>
<div class="a " style="left:653px;top:731px;width:109px;height:4px;background:#f0f0f0"></div>
<span class="t" style="left:655.00px;top:725.93px;font-size:14.5px;transform:scale(0.8741,1.0000);">Form of BKG-Area</span>
<div class="a rd" style="left:651px;top:746.4px"><i></i></div>
<span class="t" style="left:671.80px;top:745.93px;font-size:14.5px;transform:scale(0.8493,1.0000);">Standard</span>
<div class="a rd" style="left:651px;top:765.8px"></div>
<span class="t" style="left:671.80px;top:765.73px;font-size:14.5px;transform:scale(0.9234,1.0000);">Avoid Sunlit Face</span>
<div class="a rd" style="left:651px;top:785.8px"></div>
<span class="t" style="left:671.80px;top:785.53px;font-size:14.5px;transform:scale(0.9199,1.0000);">Meteor/Lunar Limb</span>
<div class="a btn" style="left:654px;top:808px;width:131px;height:29px;"></div>
<span class="t" style="left:671.00px;top:814.73px;font-size:14.5px;transform:scale(0.9119,1.0000);">Direction Setting</span>
<span class="t" style="left:659.40px;top:840.23px;font-size:14.5px;transform:scale(0.9293,1.0000);">Width</span>
<span class="t" style="left:730.00px;top:840.23px;font-size:14.5px;transform:scale(0.8767,1.0000);">Gap</span>
<div class="a ed" style="left:667px;top:858px;width:29px;height:21px;background:#fff"></div>
<span class="t" style="left:669.50px;top:860.73px;font-size:14.5px;transform:scale(0.8615,1.0000);">5</span>
<div class="a btn" style="left:698px;top:855px;width:21px;height:14px;"></div>
<div class="a btn" style="left:698px;top:871px;width:21px;height:15px;"></div>
<div class="a ed" style="left:730px;top:858px;width:29px;height:21px;background:#fff"></div>
<span class="t" style="left:732.50px;top:860.73px;font-size:14.5px;transform:scale(0.8615,1.0000);">0</span>
<div class="a btn" style="left:763px;top:855px;width:20px;height:14px;"></div>
<div class="a btn" style="left:763px;top:871px;width:20px;height:15px;"></div>
<div class="a grp" style="left:799px;top:731px;width:171px;height:161px;"></div>
<div class="a " style="left:808px;top:731px;width:157px;height:4px;background:#f0f0f0"></div>
<span class="t" style="left:810.00px;top:725.93px;font-size:14.5px;transform:scale(0.9104,1.0000);">Number of Pixels / Radius</span>
<span class="t" style="left:809.00px;top:740.63px;font-size:14.5px;transform:scale(0.8989,1.0000);">Aperture</span>
<span class="t" style="left:890.00px;top:740.63px;font-size:14.5px;transform:scale(0.9338,1.0000);">Backgound</span>
<span class="t" style="left:809.00px;top:760.73px;font-size:14.5px;transform:scale(0.9394,1.0000);">Even</span>
<span class="t" style="left:809.00px;top:780.73px;font-size:14.5px;transform:scale(0.8767,1.0000);">Odd</span>
<span class="t" style="left:809.00px;top:799.23px;font-size:14.5px;transform:scale(0.8597,1.0000);">Frame</span>
<div class="a ed" style="left:853px;top:758px;width:46px;height:18px;background:#fff"></div>
<div class="a ed" style="left:909px;top:758px;width:46px;height:18px;background:#fff"></div>
<div class="a ed" style="left:853px;top:778px;width:46px;height:18px;background:#fff"></div>
<div class="a ed" style="left:909px;top:778px;width:46px;height:18px;background:#fff"></div>
<div class="a ed" style="left:853px;top:798px;width:46px;height:18px;background:#fff"></div>
<div class="a ed" style="left:909px;top:798px;width:46px;height:18px;background:#fff"></div>
<div class="a btn" style="left:809px;top:820px;width:151px;height:18px;"></div>
<span class="t" style="left:818.00px;top:820.73px;font-size:14.5px;color:#a0a0a0;transform:scale(0.9063,1.0000);">Set &nbsp;radius to recorded</span>
<span class="t" style="left:814.80px;top:840.73px;font-size:14.5px;transform:scale(0.8975,1.0000);">Radius</span>
<span class="t" style="left:874.40px;top:840.73px;font-size:14.5px;transform:scale(0.8970,1.0000);">Inner</span>
<span class="t" style="left:919.40px;top:840.73px;font-size:14.5px;transform:scale(1.0097,1.0000);">Outer</span>
<div class="a ed" style="left:809px;top:858px;width:24px;height:23px;background:#fff"></div>
<span class="t" style="left:812.50px;top:860.73px;font-size:14.5px;transform:scale(0.8615,1.0000);">3</span>
<div class="a btn" style="left:837px;top:855px;width:21px;height:14px;"></div>
<div class="a btn" style="left:837px;top:871px;width:21px;height:15px;"></div>
<div class="a ed" style="left:864px;top:858px;width:24px;height:23px;background:#fff"></div>
<span class="t" style="left:867.00px;top:860.73px;font-size:14.5px;transform:scale(0.8615,1.0000);">5</span>
<div class="a btn" style="left:890px;top:855px;width:22px;height:14px;"></div>
<div class="a btn" style="left:890px;top:871px;width:22px;height:15px;"></div>
<div class="a ed" style="left:919px;top:858px;width:24px;height:23px;background:#fff"></div>
<span class="t" style="left:922.50px;top:860.73px;font-size:14.5px;transform:scale(0.8682,1.0000);">25</span>
<div class="a btn" style="left:945px;top:855px;width:20px;height:14px;"></div>
<div class="a btn" style="left:945px;top:871px;width:20px;height:15px;"></div>
<div class="a btn" style="left:979px;top:731px;width:140px;height:29px;"></div>
<span class="t" style="left:1003.00px;top:737.48px;font-size:14.5px;transform:scale(0.9064,1.0000);">Star Image [3D]</span>
<div class="a btn" style="left:1124px;top:730px;width:136px;height:30px;"></div>
<span class="t" style="left:1130.50px;top:736.73px;font-size:14.5px;transform:scale(0.9123,1.0000);">Update Setting Items</span>
<div class="a grp" style="left:979px;top:767px;width:201px;height:64px;"></div>
<div class="a " style="left:988px;top:767px;width:160px;height:4px;background:#f0f0f0"></div>
<span class="t" style="left:989.75px;top:762.13px;font-size:14.5px;transform:scale(0.8733,1.0000);">Measurement / View Option</span>
<div class="a btn" style="left:990px;top:777px;width:90px;height:23px;"></div>
<span class="t" style="left:1002.00px;top:780.23px;font-size:14.5px;transform:scale(0.9059,1.0000);">Show Field</span>
<div class="a ck" style="left:989px;top:805.25px;width:14px;height:14px;background:#f0f0f0"></div>
<span class="t" style="left:1011.90px;top:805.23px;font-size:14.5px;color:#a0a0a0;transform:scale(0.8925,1.0000);">Field Measure</span>
<div class="a btn" style="left:1104px;top:792px;width:19px;height:16px;"></div>
<div class="a btn" style="left:1104px;top:809px;width:19px;height:17px;"></div>
<span class="t" style="left:1124.30px;top:779.13px;font-size:14.5px;transform:scale(0.9200,1.0000);">Interval</span>
<div class="a ed" style="left:1125px;top:799px;width:44px;height:23px;background:#fff"></div>
<span class="t" style="left:1129.00px;top:802.73px;font-size:14.5px;transform:scale(0.6154,1.0000);">1</span>
<div class="a dot" style="left:1189px;top:768px;width:70px;height:23px;box-shadow:inset 1px 1px #a0a0a0,inset 2px 2px #696969,inset -1px -1px #fff"></div>
<span class="t" style="left:1203.00px;top:772.23px;font-size:14.5px;transform:scale(0.9173,1.0000);">DShow</span>
<span class="t" style="left:1187.30px;top:790.33px;font-size:14.5px;transform:scale(0.8889,1.0000);">Frame Rate</span>
<div class="a ed" style="left:1187px;top:806px;width:71px;height:24px;background:#fff"></div>
<span class="t" style="left:1194.60px;top:809.43px;font-size:14.5px;transform:scale(0.9051,1.0000);">8.0640548</span>
<div class="a " style="left:1256px;top:807px;width:2px;height:22px;background:#fff"></div>
<div class="a grp" style="left:979px;top:840px;width:101px;height:51px;"></div>
<div class="a " style="left:988px;top:840px;width:67px;height:4px;background:#f0f0f0"></div>
<span class="t" style="left:989.75px;top:834.23px;font-size:14.5px;transform:scale(0.8655,1.0000);">Field Order</span>
<div class="a rd" style="left:990.8px;top:852px"></div>
<span class="t" style="left:1011.90px;top:852.13px;font-size:14.5px;transform:scale(0.9091,1.0000);">Even first</span>
<div class="a rd" style="left:990.8px;top:869.6px"><i></i></div>
<span class="t" style="left:1011.90px;top:869.23px;font-size:14.5px;transform:scale(0.8584,1.0000);">Odd first</span>
<div class="a btn" style="left:1079px;top:840px;width:68px;height:51px;box-shadow:inset 1px 1px #808080,inset -1px -1px #808080,inset 2px 2px #fff,inset -2px -2px #696969,inset -3px -3px #8a8a8a"></div>
<span class="t" style="left:1092.20px;top:856.90px;font-size:15px;font-weight:bold;transform:scale(0.9473,1.0000);">Graph</span>
<div class="a " style="left:1084px;top:845px;width:59px;height:41px;border:1px dotted #303030"></div>
<div class="a grp" style="left:1147px;top:840px;width:113px;height:51px;"></div>
<div class="a " style="left:1155px;top:840px;width:89px;height:4px;background:#f0f0f0"></div>
<span class="t" style="left:1157.00px;top:834.13px;font-size:14.5px;transform:scale(0.8966,1.0000);">Current Object</span>
<div class="a dot" style="left:1151px;top:853px;width:31px;height:26px;box-shadow:inset 1px 1px #a0a0a0,inset 2px 2px #696969,inset -1px -1px #fff,inset -2px -2px #e3e3e3"></div>
<span class="t" style="left:1160.80px;top:859.23px;font-size:14.5px;transform:scale(1.1282,1.0000);">A</span>
<div class="a btn" style="left:1187px;top:853px;width:32px;height:26px;"></div>
<span class="t" style="left:1197.80px;top:859.23px;font-size:14.5px;color:#a0a0a0;transform:scale(0.9351,1.0000);">B</span>
<div class="a btn" style="left:1222px;top:853px;width:32px;height:26px;"></div>
<span class="t" style="left:1233.00px;top:859.23px;font-size:14.5px;color:#a0a0a0;transform:scale(0.8571,1.0000);">C</span>
<div class="a " style="left:1151px;top:880px;width:34px;height:5px;background:#a6caf0"></div>
<div class="a " style="left:1187px;top:880px;width:33px;height:5px;background:#ffff00"></div>
<div class="a " style="left:1221px;top:880px;width:34px;height:5px;background:#ff00ff"></div>
<span class="t" style="left:160.60px;top:918.43px;font-size:14.5px;font-weight:bold;transform:scale(0.9917,1.0000);">Timing process indicator</span>
<div class="a ed" style="left:10px;top:938px;width:99px;height:26px;background:#00ffff"></div>
<span class="t" style="left:13.25px;top:942.33px;font-size:14.5px;transform:scale(0.9220,1.0000);">1. Time correct</span>
<div class="a ed" style="left:110px;top:938px;width:109px;height:26px;background:#00ffff"></div>
<span class="t" style="left:113.30px;top:942.33px;font-size:14.5px;transform:scale(0.9208,1.0000);">2. XML element</span>
<div class="a ed" style="left:220px;top:938px;width:89px;height:26px;background:#00ffff"></div>
<span class="t" style="left:223.10px;top:942.33px;font-size:14.5px;transform:scale(0.9655,1.0000);">3. Light curve</span>
<div class="a ed" style="left:309px;top:938px;width:100px;height:26px;background:#fff"></div>
<span class="t" style="left:312.50px;top:942.33px;font-size:14.5px;transform:scale(0.9119,1.0000);">4. Diffraction tit</span>
<div class="a ed" style="left:410px;top:938px;width:98px;height:26px;background:#fff"></div>
<span class="t" style="left:413.70px;top:942.33px;font-size:14.5px;transform:scale(0.9134,1.0000);">5. Make report</span>
<span class="t" style="left:529.30px;top:904.70px;font-size:15px;font-weight:bold;transform:scale(1.2118,1.0000);">AVI filename</span>
<span class="t" style="left:642.50px;top:905.13px;font-size:14.5px;transform:scale(0.6250,1.0000);">:</span>
<div class="a ed" style="left:649px;top:901px;width:620px;height:22px;background:#fff"></div>
<span class="t" style="left:652.3px;top:904.65px;font-family:'Liberation Mono',monospace;font-size:12.46px;transform:scaleY(1.16);transform-origin:0 10px">C:&yen;Users&yen;yhide&yen;OneDrive&yen;<span style="display:inline-block;width:89.8px;letter-spacing:2px;font-family:'Liberation Sans',sans-serif;font-size:13px;transform:scaleX(1.0)">デスクトップ</span>&yen;capture&yen;22_49_41.avi</span><svg class="a" style="left:0;top:0;pointer-events:none" width="1279" height="963"><line x1="110.8" y1="116" x2="70.1" y2="228" stroke="#fff" stroke-width="1.2"/><circle cx="165.8" cy="185" r="31.2" fill="none" stroke="#14cdd8" stroke-width="1.7"/><polygon points="163,178.6 168.6,178.6 172.4,182.4 172.4,188 168.6,191.8 163,191.8 159.2,188 159.2,182.4" fill="none" stroke="#14cdd8" stroke-width="1.5"/><rect x="162" y="181.2" width="8" height="8" fill="#404040" stroke="#e00000" stroke-width="2"/><rect x="492.3" y="173.3" width="18" height="18" fill="none" stroke="#d000d0" stroke-width="1.6"/><defs><filter id="bl" x="-2" y="-2" width="5" height="5"><feGaussianBlur stdDeviation="1.1"/></filter></defs><circle cx="417" cy="183" r="2" fill="#fff" fill-opacity="0.55" filter="url(#bl)"/><circle cx="373" cy="183" r="1.6" fill="#fff" fill-opacity="0.3" filter="url(#bl)"/><circle cx="255" cy="261.5" r="2.6" fill="#fff" fill-opacity="0.85" filter="url(#bl)"/><circle cx="257" cy="277.5" r="2" fill="#fff" fill-opacity="0.4" filter="url(#bl)"/><circle cx="394" cy="299" r="2.2" fill="#fff" fill-opacity="0.6" filter="url(#bl)"/><circle cx="173" cy="221" r="1.2" fill="#fff" fill-opacity="0.2" filter="url(#bl)"/><circle cx="96" cy="281" r="1.2" fill="#fff" fill-opacity="0.15" filter="url(#bl)"/><line x1="597.5" y1="131.3" x2="810" y2="131.3" stroke="#00f000" stroke-width="1.6"/><line x1="597.5" y1="371.4" x2="810" y2="371.4" stroke="#808080" stroke-width="1.3"/><polyline points="597.5,307.7 600.6,308.7 604.7,308.7 606.8,309.8 611,314 618.2,320.7 623.4,325.9 626.5,329.5 629.6,331.6 634.3,336.8 641.6,342.5 647.3,346.6 659.7,351.3 664.9,352.3 705,352.6 804,352.6" fill="none" stroke="#ff2020" stroke-width="1.5"/><circle cx="597.5" cy="289.5" r="2.05" fill="none" stroke="#0000ff" stroke-width="1.25"/><circle cx="616.1" cy="315" r="2.05" fill="none" stroke="#0000ff" stroke-width="1.25"/><circle cx="616.1" cy="317" r="2.05" fill="none" stroke="#0000ff" stroke-width="1.25"/><circle cx="623.9" cy="316" r="2.05" fill="none" stroke="#0000ff" stroke-width="1.25"/><circle cx="640" cy="320.7" r="2.05" fill="none" stroke="#0000ff" stroke-width="1.25"/><circle cx="616.1" cy="323.3" r="2.05" fill="none" stroke="#0000ff" stroke-width="1.25"/><circle cx="616.1" cy="328.5" r="2.05" fill="none" stroke="#0000ff" stroke-width="1.25"/><circle cx="623.9" cy="328.5" r="2.05" fill="none" stroke="#0000ff" stroke-width="1.25"/><circle cx="623.9" cy="340.9" r="2.05" fill="none" stroke="#0000ff" stroke-width="1.25"/><circle cx="623.9" cy="344.8" r="2.05" fill="none" stroke="#0000ff" stroke-width="1.25"/><circle cx="635" cy="333.3" r="2.05" fill="none" stroke="#0000ff" stroke-width="1.25"/><circle cx="635" cy="339.9" r="2.05" fill="none" stroke="#0000ff" stroke-width="1.25"/><circle cx="635" cy="342.3" r="2.05" fill="none" stroke="#0000ff" stroke-width="1.25"/><circle cx="640" cy="335.7" r="2.05" fill="none" stroke="#0000ff" stroke-width="1.25"/><circle cx="640" cy="340.9" r="2.05" fill="none" stroke="#0000ff" stroke-width="1.25"/><circle cx="640" cy="346.1" r="2.05" fill="none" stroke="#0000ff" stroke-width="1.25"/><circle cx="640" cy="348.2" r="2.05" fill="none" stroke="#0000ff" stroke-width="1.25"/><circle cx="640" cy="355" r="2.05" fill="none" stroke="#0000ff" stroke-width="1.25"/><circle cx="640" cy="357" r="2.05" fill="none" stroke="#0000ff" stroke-width="1.25"/><circle cx="649.9" cy="345.6" r="2.05" fill="none" stroke="#0000ff" stroke-width="1.25"/><circle cx="649.9" cy="354.4" r="2.05" fill="none" stroke="#0000ff" stroke-width="1.25"/><circle cx="653.7" cy="347.7" r="2.05" fill="none" stroke="#0000ff" stroke-width="1.25"/><circle cx="653.7" cy="358" r="2.05" fill="none" stroke="#0000ff" stroke-width="1.25"/><circle cx="656.4" cy="343.5" r="2.05" fill="none" stroke="#0000ff" stroke-width="1.25"/><circle cx="656.4" cy="349.7" r="2.05" fill="none" stroke="#0000ff" stroke-width="1.25"/><circle cx="656.4" cy="353.4" r="2.05" fill="none" stroke="#0000ff" stroke-width="1.25"/><circle cx="664.9" cy="345.6" r="2.05" fill="none" stroke="#0000ff" stroke-width="1.25"/><circle cx="664.9" cy="349.2" r="2.05" fill="none" stroke="#0000ff" stroke-width="1.25"/><circle cx="664.9" cy="352.3" r="2.05" fill="none" stroke="#0000ff" stroke-width="1.25"/><circle cx="664.9" cy="357.5" r="2.05" fill="none" stroke="#0000ff" stroke-width="1.25"/><circle cx="672.4" cy="352.9" r="2.05" fill="none" stroke="#0000ff" stroke-width="1.25"/><circle cx="672.4" cy="358" r="2.05" fill="none" stroke="#0000ff" stroke-width="1.25"/><circle cx="675.3" cy="346.6" r="2.05" fill="none" stroke="#0000ff" stroke-width="1.25"/><circle cx="675.3" cy="350.8" r="2.05" fill="none" stroke="#0000ff" stroke-width="1.25"/><circle cx="677.9" cy="343.5" r="2.05" fill="none" stroke="#0000ff" stroke-width="1.25"/><circle cx="677.9" cy="355" r="2.05" fill="none" stroke="#0000ff" stroke-width="1.25"/><circle cx="681.5" cy="345.6" r="2.05" fill="none" stroke="#0000ff" stroke-width="1.25"/><circle cx="681.5" cy="349.7" r="2.05" fill="none" stroke="#0000ff" stroke-width="1.25"/><circle cx="681.5" cy="352.9" r="2.05" fill="none" stroke="#0000ff" stroke-width="1.25"/><circle cx="681.5" cy="356" r="2.05" fill="none" stroke="#0000ff" stroke-width="1.25"/><circle cx="681.5" cy="358.6" r="2.05" fill="none" stroke="#0000ff" stroke-width="1.25"/><circle cx="691.4" cy="348.2" r="2.05" fill="none" stroke="#0000ff" stroke-width="1.25"/><circle cx="691.4" cy="351.8" r="2.05" fill="none" stroke="#0000ff" stroke-width="1.25"/><circle cx="691.4" cy="354.9" r="2.05" fill="none" stroke="#0000ff" stroke-width="1.25"/><circle cx="691.4" cy="358" r="2.05" fill="none" stroke="#0000ff" stroke-width="1.25"/><polygon points="1223.0,282 1223.0,292 1218.0,287" fill="#000"/><polygon points="1239.5,282 1239.5,292 1244.5,287" fill="#000"/><polygon points="1208.6,395.65 1215.6,395.65 1212.1,392.15" fill="#000"/><polygon points="1208.6,408.35 1215.6,408.35 1212.1,411.85" fill="#000"/><polygon points="1162.25,585.2 1169.25,585.2 1165.75,581.7" fill="#000"/><polygon points="1162.25,596.05 1169.25,596.05 1165.75,599.55" fill="#000"/><polygon points="1243.5,577.75 1252.5,577.75 1248,582.25" fill="#000"/><polygon points="140.25,669.0 140.25,676.0 136.75,672.5" fill="#000"/><polygon points="537.45,669.0 537.45,676.0 540.95,672.5" fill="#000"/><path d="M139.5 697.5h2.2v13h-2.2z M141.7 704 L147.5 698 V710Z M147.5 704 L153.5 698 V710Z" fill="#000"/><path d="M183 697.5 V710.5 L176.5 704Z" fill="#000"/><path d="M343.8 697.5 V710.5 L356.6 704Z" fill="#000"/><polygon points="415.575,859.375 422.575,859.375 419.075,855.875" fill="#000"/><polygon points="415.575,871.825 422.575,871.825 419.075,875.325" fill="#000"/><polygon points="483.825,863.9 489.425,863.9 486.625,861.1" fill="#000"/><polygon points="483.825,872.85 489.425,872.85 486.625,875.65" fill="#000"/><polygon points="704.3,863.4 711.3,863.4 707.8,859.9" fill="#000"/><polygon points="704.3,875.95 711.3,875.95 707.8,879.45" fill="#000"/><polygon points="769.05,863.4 776.05,863.4 772.55,859.9" fill="#000"/><polygon points="769.05,875.95 776.05,875.95 772.55,879.45" fill="#000"/><polygon points="843.05,863.5 850.05,863.5 846.55,860.0" fill="#000"/><polygon points="843.05,875.85 850.05,875.85 846.55,879.35" fill="#000"/><polygon points="896.9,863.5 903.9,863.5 900.4,860.0" fill="#000"/><polygon points="896.9,875.85 903.9,875.85 900.4,879.35" fill="#000"/><polygon points="951.15,863.5 958.15,863.5 954.65,860.0" fill="#000"/><polygon points="951.15,875.85 958.15,875.85 954.65,879.35" fill="#000"/><polygon points="1109.7,800.75 1116.7,800.75 1113.2,797.25" fill="#000"/><polygon points="1109.7,815.375 1116.7,815.375 1113.2,818.875" fill="#000"/></svg></body></html>
